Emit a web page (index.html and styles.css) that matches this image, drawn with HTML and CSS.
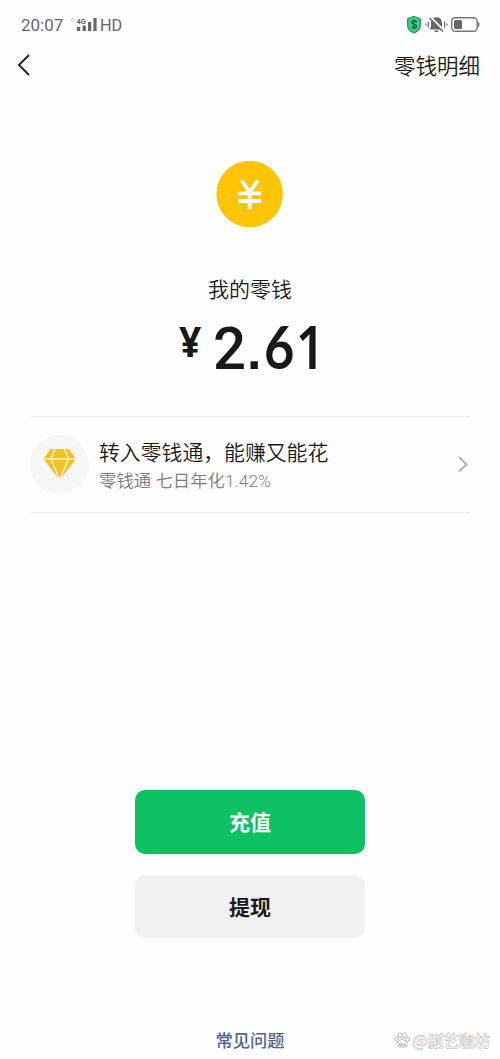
FILE: index.html
```html
<!DOCTYPE html>
<html lang="zh-CN">
<head>
<meta charset="utf-8">
<title>零钱</title>
<link rel="stylesheet" href="styles.css">
</head>
<body>
<div class="screen">
  <header class="status">
    <span class="clock">20:07</span>
    <svg class="signal" width="28" height="18" viewBox="0 0 28 18">
      <rect x="0.500" y="2.500" width="2" height="3" rx="1" fill="none" stroke="#bbb" stroke-width=".7"/>
      <text class="net" x="5.500" y="7.500">4G</text>
      <path d="M7.600 11v4M13.200 9.500V15M18.600 6v9M24 2v13" stroke="#666" stroke-width="3.200"/>
    </svg>
    <span class="hd">HD</span>
    <svg class="tray" width="76" height="20" viewBox="0 0 76 20">
      <path d="M8 1.500 14.300 4v6.500c0 3.500-2.600 5.900-6.300 7.500-3.700-1.600-6.300-4-6.300-7.500V4z" fill="#35d583" stroke="#278f5f" stroke-width="1.300"/>
      <path d="M10.700 7.200C10 5.300 5.600 5.300 5.600 7.500c0 2.400 5 1.300 5 3.800 0 2.200-4.600 2.200-5.200.2M8 4.500v9.800" fill="none" stroke="#17643f" stroke-width="1.400"/>
      <path d="M30.500 2.200c-4 0-5.500 2.800-5.500 6V12l-1.500 2.500h14L36 12V8.200c0-3.200-1.500-6-5.500-6zM28 15.500h5c-.6 2-4.400 2-5 0z" fill="#666"/>
      <path d="M24.500 2.500 38 16" stroke="#fff" stroke-width="2.600"/>
      <path d="M23.500 3 37 16.500" stroke="#666" stroke-width="1.500"/>
      <path d="M22.300 6.500v6M20 8.500v2M38.600 6.500v6M41 8.500v2" stroke="#777" stroke-width="1.300"/>
      <rect x="45.700" y="2.700" width="25.500" height="13.600" rx="3.500" fill="none" stroke="#777" stroke-width="1.400"/>
      <rect x="48" y="5" width="8" height="9" rx="1.500" fill="#666"/>
      <path d="M72.600 7.500v4" stroke="#777" stroke-width="1.600"/>
    </svg>
  </header>
  <nav class="nav">
    <svg width="14" height="24" viewBox="0 0 14 24"><path d="M12 2 2 12l10 10" fill="none" stroke="#222" stroke-width="1.900"/></svg>
    <span>零钱明细</span>
  </nav>
  <main class="main">
    <svg class="coin" width="68" height="68" viewBox="0 0 68 68">
      <circle cx="33.700" cy="34" r="33.300" fill="#fdc404"/>
      <path d="M25.600 20.500 33.700 32l8.100-11.500M33.700 31v18M22.200 33.300h23M22.200 41h23" fill="none" stroke="#fff" stroke-width="3.800"/>
    </svg>
    <h1 class="label">我的零钱</h1>
    <div class="amount"><span class="yen">¥</span><span class="two">2</span><span class="dot">.</span><span class="six">6</span><span class="one">1</span></div>
    <section class="promo">
      <svg class="gem" width="60" height="60" viewBox="0 0 60 60">
        <circle cx="29.500" cy="29.500" r="29.500" fill="#f6f6f6"/>
        <path d="M20.500 14H39l7 10L29.700 45 13.500 24z" fill="#f5c023"/>
        <path d="M12 23.800h36M25.500 13 21 23.800 29.700 45M34 13l4.500 10.800L29.700 45" fill="none" stroke="#fff8df" stroke-width="1.300"/>
      </svg>
      <div class="copy">
        <div class="title">转入零钱通，能赚又能花</div>
        <div class="rate">零钱通 七日年化1.42%</div>
      </div>
      <svg class="more" width="12" height="18" viewBox="0 0 12 18"><path d="m2 2 7.500 7.200L2 16.500" fill="none" stroke="#b0b0b0" stroke-width="2"/></svg>
    </section>
    <div class="actions">
      <button class="btn primary">充值</button>
      <button class="btn">提现</button>
    </div>
  </main>
  <footer class="footer">
    <span class="faq">常见问题</span>
    <span class="mark">
      <svg width="16" height="16" viewBox="0 0 16 16" fill="#fff" stroke="#aaa" stroke-width=".8"><ellipse cx="2.500" cy="7" rx="1.800" ry="2.300"/><ellipse cx="6" cy="3.200" rx="1.800" ry="2.400"/><ellipse cx="10.500" cy="3.200" rx="1.800" ry="2.400"/><ellipse cx="13.700" cy="7.300" rx="1.800" ry="2.300"/><path d="M8 7c-2 0-2.500 2-4 3.200-2 1.800-1 4.800 1.500 4.800h5.200c2.600 0 3.600-3 1.600-4.800C10.700 9 10 7 8 7z"/><path d="M5.500 11.500h2v2h-2zM9 11v2.500h2V11"/></svg>
      <span class="mark-text">@剧艺咖坊</span>
    </span>
  </footer>
</div>
</body>
</html>
```
FILE: styles.css
```css
* { box-sizing: border-box; }
body { margin: 0; background: #fefefe; color: #181818; font-family: "Noto Sans CJK SC", sans-serif; font-weight: 350; }
.screen { width: 500px; height: 1059px; display: flex; flex-direction: column; overflow: hidden; }
.status { height: 45px; padding: 15px 18px 0 21px; display: flex; align-items: flex-start; color: #666; font: 17px/20px Roboto, sans-serif; }
.clock { width: 50px; }
.signal { margin-top: 1px; }
.net { font: bold 7.5px Roboto, sans-serif; fill: #666; }
.hd { margin-left: 1px; font-size: 16.3px; line-height: 21px; }
.tray { margin-left: auto; }
.nav { height: 40px; padding: 0 20px 0 17px; display: flex; align-items: center; justify-content: space-between; font-size: 21.5px; line-height: 32px; }
.main { padding: 75px 30px 0; display: flex; flex-direction: column; align-items: center; }
.coin { flex: none; }
.label { margin: 44px 0 0; font-size: 21px; line-height: 32px; font-weight: 350; }
.amount { width: 144px; height: 64px; margin: 10px 0 38px; display: grid; grid-template-columns: 35px 34px 17px 32px 26px; align-items: baseline; white-space: nowrap; }
.yen { font: 700 41px/64px "Noto Sans", sans-serif; transform: translateY(-12px) scaleX(.95); }
.two { font: 500 60px/64px Roboto, sans-serif; transform: scaleX(.97); transform-origin: left; }
.dot { font: 700 52px/64px "Liberation Sans", sans-serif; }
.six { width: 34px; font: 700 59.5px/64px Lato, sans-serif; transform: scaleX(.88); transform-origin: left; }
.one { width: 34px; font: 600 59px/64px "Noto Sans", sans-serif; transform: scaleX(.85); transform-origin: left; }
.promo { width: 440px; height: 97px; border: solid #ececec; border-width: 1px 0; display: flex; align-items: center; }
.copy { flex: 1; margin: 1px 0 0 9px; }
.title { font-size: 20.85px; line-height: 31px; }
.rate { font: 350 17.4px/28px Roboto, "Noto Sans CJK SC", sans-serif; color: #7c7c7c; }
.more { margin: 0 1px 2px 0; }
.actions { margin-top: 277px; display: flex; flex-direction: column; gap: 21px; }
.btn { width: 230px; height: 63px; padding: 0 0 2px; border: 0; border-radius: 10px; background: #f2f0f3; color: #181818; font: 700 21px/32px "Noto Sans CJK SC", sans-serif; }
.primary { height: 64px; background: #0bc162; color: #fff; }
.footer { margin-top: auto; height: 33px; display: grid; grid-template-columns: 1fr 69px 1fr; align-items: start; }
.faq { grid-column: 2; font-size: 17.3px; line-height: 28px; font-weight: 500; color: #52658f; white-space: nowrap; }
.mark { display: flex; align-items: center; justify-content: flex-end; gap: 2px; padding-right: 10px; height: 28px; }
.mark-text { font-size: 15.6px; line-height: 24px; font-weight: 700; color: #fff; -webkit-text-stroke: .5px #b4b4b4; white-space: nowrap; }
```
